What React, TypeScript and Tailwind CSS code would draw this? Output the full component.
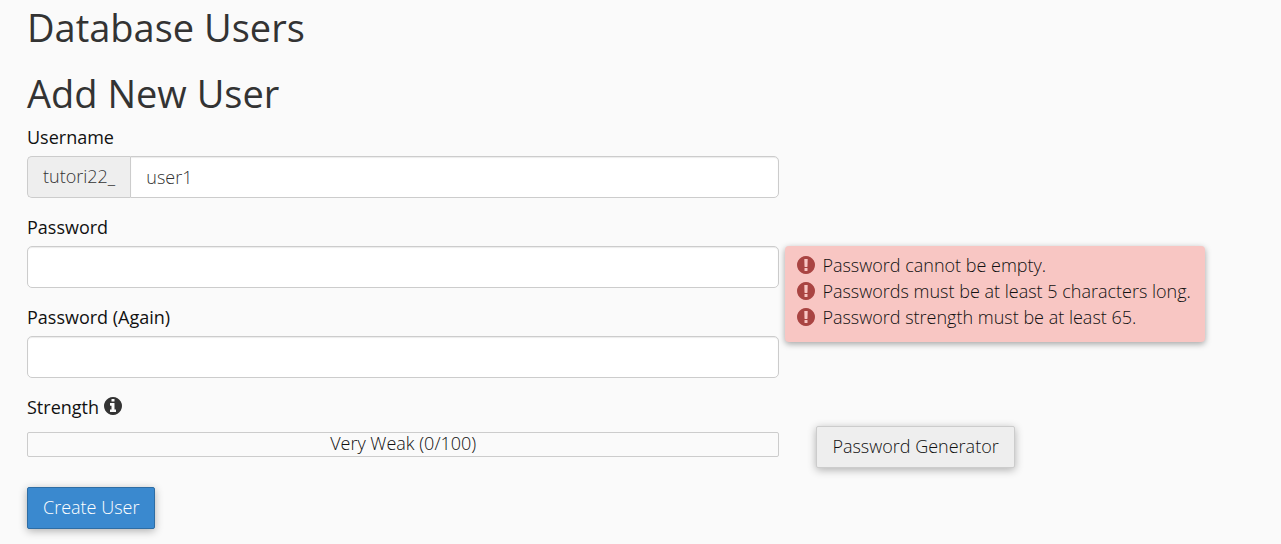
import { useState } from "react";

const passwordErrors = [
  "Password cannot be empty.",
  "Passwords must be at least 5 characters long.",
  "Password strength must be at least 65.",
];

const InfoIcon = () => (
  <svg viewBox="128 128 1536 1536" className="size-[18px] fill-current" aria-hidden="true">
    <path d="M1152 1376v-160q0-14-9-23t-23-9h-96v-512q0-14-9-23t-23-9h-320q-14 0-23 9t-9 23v160q0 14 9 23t23 9h96v320h-96q-14 0-23 9t-9 23v160q0 14 9 23t23 9h448q14 0 23-9t9-23zm-128-896v-160q0-14-9-23t-23-9h-192q-14 0-23 9t-9 23v160q0 14 9 23t23 9h192q14 0 23-9t9-23zm640 416q0 209-103 385.5t-279.5 279.5-385.5 103-385.5-103-279.5-279.5-103-385.5 103-385.5 279.5-279.5 385.5-103 385.5 103 279.5 279.5 103 385.5z" />
  </svg>
);

const ErrorIcon = () => (
  <svg viewBox="128 128 1536 1536" className="size-[18px] shrink-0 fill-[#a94442]" aria-hidden="true">
    <path d="M896 128q209 0 385.5 103t279.5 279.5 103 385.5-103 385.5-279.5 279.5-385.5 103-385.5-103-279.5-279.5-103-385.5 103-385.5 279.5-279.5 385.5-103zm128 1247v-190q0-14-9-23.5t-22-9.5h-192q-13 0-23 10t-10 23v190q0 13 10 23t23 10h192q13 0 22-9.5t9-23.5zm-2-344l18-621q0-12-10-18-10-8-24-8h-220q-14 0-24 8-10 6-10 18l17 621q0 10 10 17.5t24 7.5h185q14 0 23.5-7.5t10.5-17.5z" />
  </svg>
);

const inputClass =
  "h-[42px] w-full rounded-[5px] border border-[#ccc] bg-white px-[15px] text-[#333] shadow-[inset_0_1px_1px_rgba(0,0,0,0.08)] outline-none";

const App = () => {
  const [username, setUsername] = useState("user1");
  const [password, setPassword] = useState("");
  const [confirm, setConfirm] = useState("");

  return (
    <main className="min-h-screen bg-[#fafafa] pt-[5px] pb-4 pl-[27px] font-['Open_Sans',sans-serif] text-[18px] leading-[26px] font-light text-[#111]">
      <h1 className="text-[38px] leading-[44px] font-normal text-[#333]">Database Users</h1>
      <h2 className="mt-[22px] text-[38px] leading-[44px] font-normal text-[#333]">Add New User</h2>

      <form className="mt-[9px]" onSubmit={(e) => e.preventDefault()}>
        <div className="mb-4 w-3/5">
          <label htmlFor="username" className="mb-[6px] block font-medium">Username</label>
          <div className="flex">
            <span className="flex items-center rounded-l-[5px] border border-r-0 border-[#ccc] bg-[#eee] px-[15px] pb-[2px] text-[#333]">
              tutori22_
            </span>
            <input
              id="username"
              type="text"
              className={`${inputClass} min-w-0 flex-1 rounded-l-none`}
              value={username}
              onChange={(e) => setUsername(e.target.value)}
            />
          </div>
        </div>

        <div className="relative mb-4 w-3/5">
          <label htmlFor="password" className="mb-[6px] block font-medium">Password</label>
          <input
            id="password"
            type="password"
            className={`${inputClass} block`}
            value={password}
            onChange={(e) => setPassword(e.target.value)}
          />
          <ul className="absolute top-8 left-full ml-[6px] h-24 w-[420px] rounded bg-[#f8c6c3] px-3 py-[6px] shadow-[0_2px_6px_rgba(0,0,0,0.35)]">
            {passwordErrors.map((error) => (
              <li key={error} className="flex items-center gap-[7px] whitespace-nowrap">
                <ErrorIcon />
                {error}
              </li>
            ))}
          </ul>
        </div>

        <div className="mb-4 w-3/5">
          <label htmlFor="confirm" className="mb-[6px] block font-medium">Password (Again)</label>
          <input
            id="confirm"
            type="password"
            className={`${inputClass} block`}
            value={confirm}
            onChange={(e) => setConfirm(e.target.value)}
          />
        </div>

        <div className="mb-[6px] flex items-start gap-[5px] font-medium">
          <span id="strength">Strength</span>
          <span className="pt-[3px] text-[#333]">
            <InfoIcon />
          </span>
        </div>
        <div className="flex items-start">
          <div
            role="progressbar"
            aria-labelledby="strength"
            aria-valuenow={0}
            aria-valuemin={0}
            aria-valuemax={100}
            className="mt-[6px] w-3/5 rounded-[2px] border border-[#ccc] pb-[2px] text-center leading-[21px]"
          >
            Very Weak (0/100)
          </div>
          <button
            type="button"
            className="ml-[37px] h-[42px] rounded-[2px] border border-[#ccc] bg-[#eee] px-[15px] pb-[2px] shadow-[0_2px_8px_rgba(0,0,0,0.3)]"
          >
            Password Generator
          </button>
        </div>

        <button
          type="submit"
          className="mt-[19px] h-[42px] rounded-[2px] border border-[#2e6da4] bg-[#3a89cf] px-[15px] pb-[2px] text-white shadow-[0_2px_8px_rgba(0,0,0,0.3)]"
        >
          Create User
        </button>
      </form>
    </main>
  );
};

export default App;
